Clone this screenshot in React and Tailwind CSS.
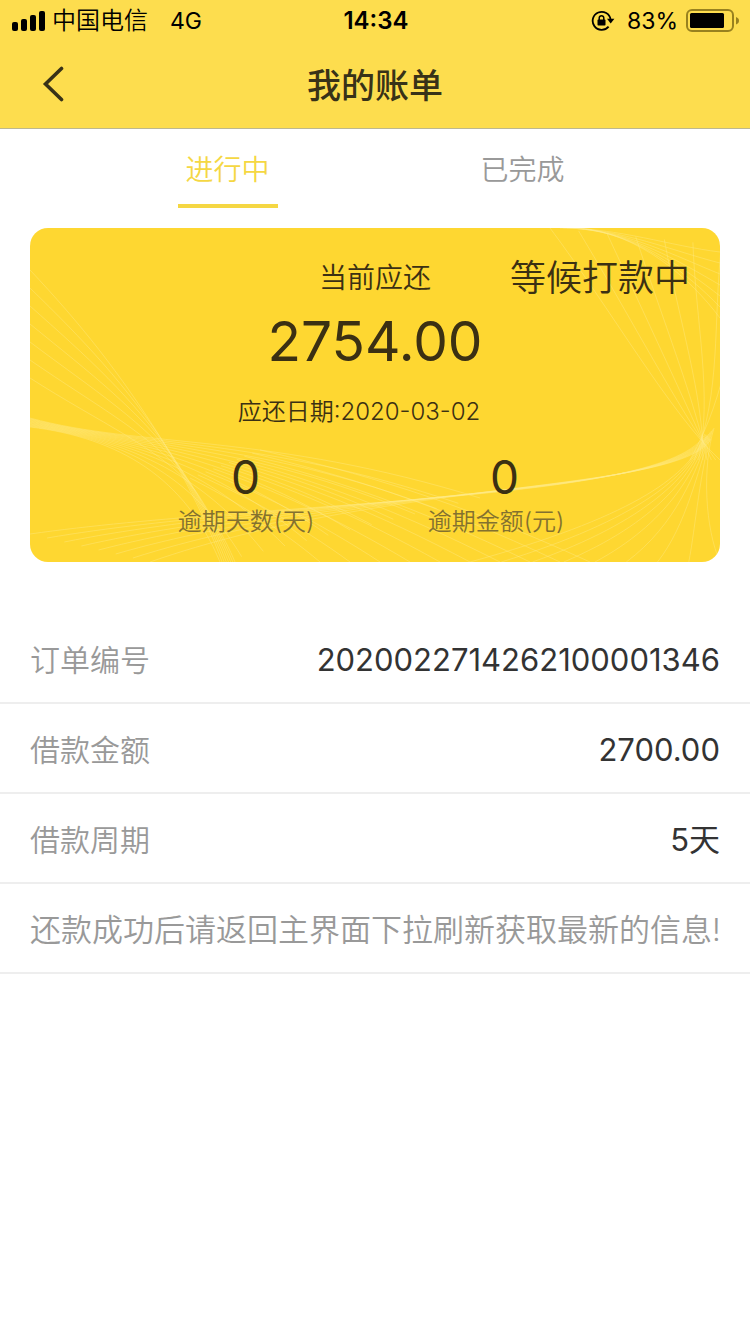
import React, { useState } from 'react';

const tabs = ['进行中', '已完成'];

const details = [
  { label: '订单编号', value: '2020022714262100001346' },
  { label: '借款金额', value: '2700.00' },
  { label: '借款周期', value: '5天' },
];

// Each family is a set of curves blended between two cubic beziers
const waveFamilies = [
  { from: [0, 42, 50, 95, 90, 145, 132, 212], to: [0, 150, 70, 195, 130, 220, 165, 262], count: 7 },
  { from: [132, 212, 155, 250, 180, 300, 192, 334], to: [165, 262, 180, 285, 195, 310, 205, 334], count: 7 },
  { from: [0, 190, 110, 220, 240, 205, 450, 270], to: [0, 199, 90, 210, 155, 250, 190, 334], count: 13 },
  { from: [0, 306, 240, 272, 640, 275, 675, 206], to: [120, 334, 360, 250, 650, 265, 681, 211], count: 8 },
  { from: [440, 334, 600, 290, 655, 250, 673, 212], to: [690, 334, 675, 300, 672, 240, 684, 200], count: 9 },
  { from: [520, 0, 580, 80, 640, 185, 690, 232], to: [720, 20, 700, 100, 700, 160, 660, 232], count: 8 },
  { from: [530, 0, 590, 0, 640, 18, 690, 24], to: [550, 0, 610, 6, 660, 50, 690, 90], count: 7 },
  { from: [230, 222, 330, 245, 420, 270, 560, 334], to: [160, 250, 200, 270, 250, 300, 290, 334], count: 10 },
];

const buildCurve = (from, to, t) => {
  const p = from.map((v, i) => Math.round((v + (to[i] - v) * t) * 10) / 10);
  return `M${p[0]} ${p[1]}C${p[2]} ${p[3]} ${p[4]} ${p[5]} ${p[6]} ${p[7]}`;
};

const Waves = () => (
  <svg
    className="absolute inset-0 w-full h-full"
    viewBox="0 0 690 334"
    preserveAspectRatio="none"
    fill="none"
    stroke="#ffec8a"
    strokeOpacity="0.4"
    aria-hidden="true"
  >
    {waveFamilies.map(({ from, to, count }, f) =>
      Array.from({ length: count }, (_, i) => (
        <path key={`${f}-${i}`} d={buildCurve(from, to, i / (count - 1))} />
      ))
    )}
  </svg>
);

const SignalIcon = () => (
  <svg width="34" height="20" viewBox="0 0 34 20" aria-hidden="true">
    <rect x="0" y="11" width="6" height="9" rx="2" />
    <rect x="9" y="8" width="6" height="12" rx="2" />
    <rect x="18" y="4" width="6" height="16" rx="2" />
    <rect x="27" y="0" width="6" height="20" rx="2" />
  </svg>
);

const RotationLockIcon = () => (
  <svg width="24" height="22" viewBox="0 0 24 22" fill="none" stroke="#000" aria-hidden="true">
    <path d="M17.600 16.600A9 9 0 1 1 19.600 9.600" strokeWidth="1.8" />
    <path d="M16 8.800h7.400l-3.700 4.800z" fill="#000" stroke="none" />
    <rect x="6.500" y="9.600" width="8" height="6" rx="0.8" fill="#000" stroke="none" />
    <path d="M8.200 10V8a2.300 2.300 0 0 1 4.600 0v2" strokeWidth="1.5" />
  </svg>
);

const BatteryIcon = () => (
  <svg width="54" height="24" viewBox="0 0 54 24" aria-hidden="true">
    <rect x="1" y="1" width="46" height="21" rx="5" fill="none" stroke="#98811f" strokeWidth="2" />
    <rect x="4" y="4" width="34" height="15" rx="1.5" />
    <path d="M50 8c2 .8 3 2 3 3.700s-1 2.900-3 3.700z" fill="#98811f" />
  </svg>
);

const StatusBar = () => (
  <div className="grid grid-cols-[1fr_auto_1fr] items-center h-10 pt-px pl-3 pr-[10px] text-[23px] leading-6 text-black">
    <div className="flex items-center gap-[6px]">
      <SignalIcon />
      <span className="text-2xl leading-6 font-[350]">中国电信</span>
      <span className="ml-4">4G</span>
    </div>
    <span className="text-2xl leading-6 font-semibold">14:34</span>
    <div className="flex items-center justify-end gap-2">
      <RotationLockIcon />
      <span className="ml-1">83%</span>
      <BatteryIcon />
    </div>
  </div>
);

const BillCard = () => (
  <section className="relative mx-[30px] mt-5 overflow-hidden rounded-[18px] bg-[#fed731] text-[#3b3013]">
    <Waves />
    <div className="relative flex flex-col pt-6 pb-5">
      <div className="grid grid-cols-[1fr_auto_1fr] items-center px-[30px] font-[350]">
        <h2 className="col-start-2 text-[28px] leading-[52px]">当前应还</h2>
        <span className="text-right text-4xl leading-[52px] whitespace-nowrap">等候打款中</span>
      </div>
      <p className="text-center text-[55px] leading-[74px]">2754.00</p>
      <p className="mt-[18px] pr-8 text-center text-2xl leading-8 font-[350]">应还日期:2020-03-02</p>
      <div className="mt-6 grid grid-cols-2 px-[86px] text-center text-[46px] leading-[50px]">
        <span>0</span>
        <span>0</span>
      </div>
      <div className="grid grid-cols-2 pl-[91px] pr-[99px] text-center text-2xl leading-10 font-[350] text-[#83712f]">
        <span>逾期天数(天)</span>
        <span>逾期金额(元)</span>
      </div>
    </div>
  </section>
);

const App = () => {
  const [active, setActive] = useState(0);

  return (
    <div className="min-h-screen bg-white font-['Inter','Noto_Sans_CJK_SC',sans-serif]">
      <header className="border-b border-[#bdb88f] bg-[#fddd4e]">
        <StatusBar />
        <div className="grid grid-cols-[1fr_auto_1fr] items-center h-[88px] px-10 text-[#383218]">
          <button type="button" aria-label="返回" className="justify-self-start">
            <svg width="26" height="36" viewBox="0 0 26 36" fill="none" stroke="currentColor" strokeWidth="3.6" strokeLinecap="round" strokeLinejoin="miter">
              <path d="M21.500 2.500 5.500 18l16 15.500" />
            </svg>
          </button>
          <h1 className="pt-1 text-[34px] leading-[48px] font-medium">我的账单</h1>
        </div>
      </header>

      <main>
        {/* Tabs */}
        <nav className="grid grid-cols-2 justify-items-center px-20">
          {tabs.map((tab, i) => (
            <button
              key={tab}
              type="button"
              onClick={() => setActive(i)}
              className={`w-[100px] h-[79px] pt-[6px] border-b-4 text-[28px] leading-10 font-[350] ${
                active === i ? 'border-[#f5d743] text-[#f5d743]' : 'border-transparent text-[#999]'
              }`}
            >
              {tab}
            </button>
          ))}
        </nav>

        <BillCard />

        {/* Order details */}
        <dl className="mt-[52px]">
          {details.map(({ label, value }) => (
            <div key={label} className="flex items-center justify-between h-[90px] pt-[3px] px-[30px] border-b-2 border-[#eee]">
              <dt className="text-[30px] leading-10 font-[350] text-[#999]">{label}</dt>
              <dd className="text-[31px] leading-10 text-[#333]">{value}</dd>
            </div>
          ))}
        </dl>
        <p className="flex items-center h-[90px] pt-[3px] px-[30px] border-b-2 border-[#eee] text-[31px] leading-10 font-[350] text-[#999] whitespace-nowrap">
          还款成功后请返回主界面下拉刷新获取最新的信息!
        </p>
      </main>
    </div>
  );
};

export default App;
